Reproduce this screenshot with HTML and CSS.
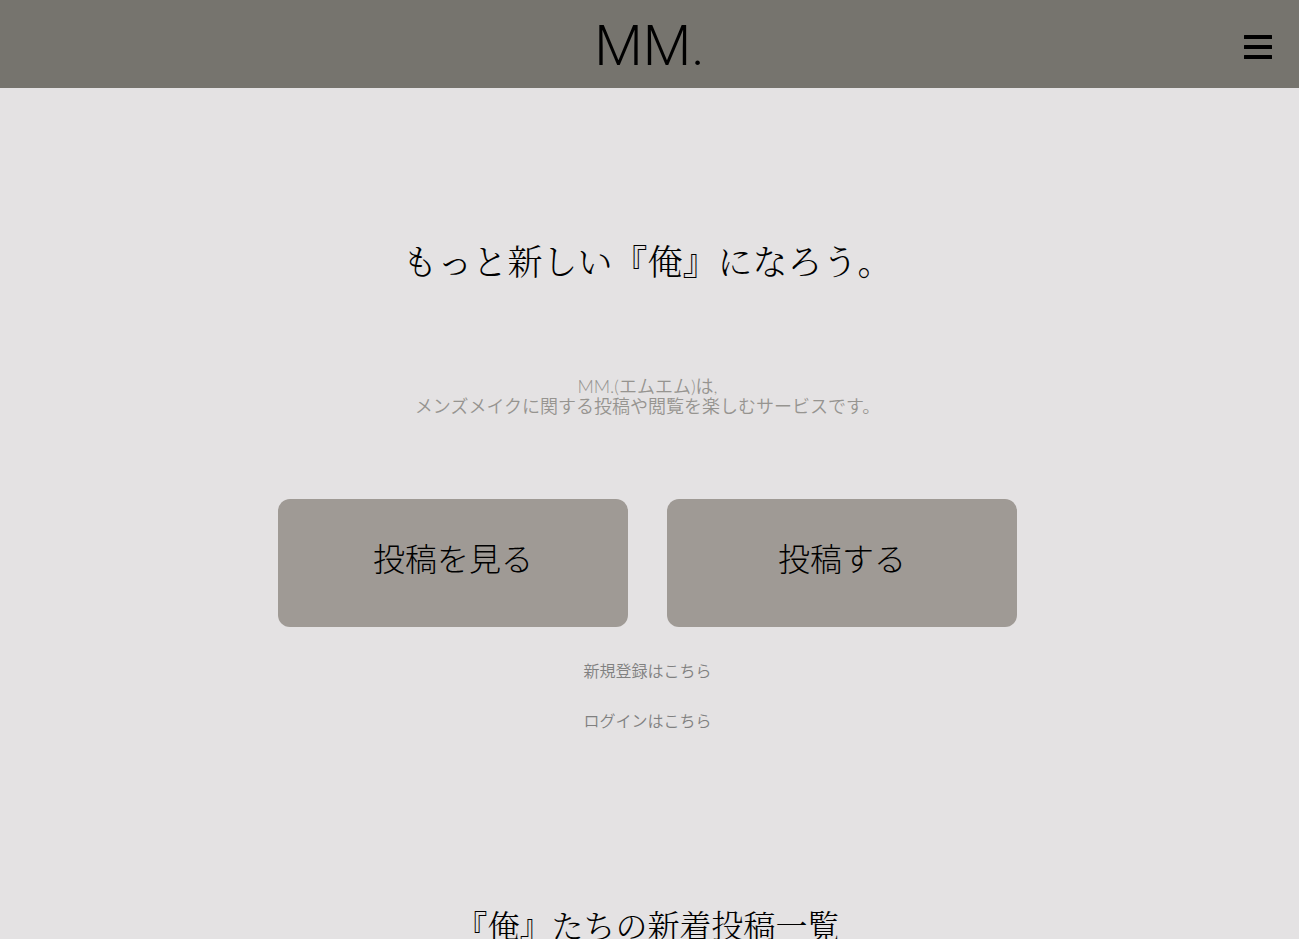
FILE: index.html
```html
<!DOCTYPE html>
<html lang="ja">
<head>
<meta charset="utf-8">
<title>MM.</title>
<link rel="stylesheet" href="styles.css">
</head>
<body>
<header class="header">
  <a class="logo" href="#">MM.</a>
  <button class="menu" type="button" aria-label="メニュー">
    <svg viewBox="0 0 28 24" width="28" height="24" aria-hidden="true"><path d="M.5 0h27q.5 0 .5.5v3q0 .5-.5.5H.5Q0 4 0 3.500v-3Q0 0 .5 0zM.5 10h27q.5 0 .5.5v3q0 .5-.5.5H.5q-.5 0-.5-.5v-3q0-.5.5-.5zM.5 20h27q.5 0 .5.5v3q0 .5-.5.5H.5q-.5 0-.5-.5v-3q0-.5.5-.5z"/></svg>
  </button>
</header>
<main class="main">
  <h1 class="title">もっと新しい『俺』になろう。</h1>
  <p class="lead">MM.(エムエム)は,<br>メンズメイクに関する投稿や閲覧を楽しむサービスです。</p>
  <div class="actions">
    <a class="action" href="#">投稿を見る</a>
    <a class="action" href="#">投稿する</a>
  </div>
  <nav class="links">
    <a class="link" href="#">新規登録はこちら</a>
    <a class="link" href="#">ログインはこちら</a>
  </nav>
  <h2 class="subtitle">『俺』たちの新着投稿一覧</h2>
</main>
</body>
</html>
```
FILE: styles.css
```css
* { box-sizing: border-box; }
body {
  margin: 0;
  background: #e4e2e3;
  color: #000;
  font-family: Lato, "Noto Sans CJK JP", sans-serif;
}
.header {
  display: grid;
  grid-template-columns: 1fr auto 1fr;
  align-items: center;
  padding: 0 27px;
  background: #76746e;
}
.logo {
  grid-column: 2;
  padding-top: 4px;
  color: #000;
  font-family: Roboto, sans-serif;
  font-size: 56px;
  font-weight: 300;
  line-height: 84px;
  text-decoration: none;
}
.menu {
  justify-self: end;
  padding: 6px 0 0;
  border: 0;
  background: none;
}
.menu svg { display: block; }
.main {
  display: flex;
  flex-direction: column;
  align-items: center;
  padding-right: 4px;
  text-align: center;
}
.title, .subtitle {
  margin: 0;
  font-family: "Noto Serif CJK JP", "Noto Sans CJK JP", serif;
  font-weight: 300;
}
.title {
  margin-top: 148px;
  font-size: 35px;
  line-height: 48px;
}
.lead {
  margin: 92px 0 0;
  color: #969490;
  font-size: 18px;
  font-weight: 350;
  line-height: 20px;
}
.actions {
  display: flex;
  justify-content: center;
  gap: 39px;
  width: 100%;
  margin-top: 83px;
}
.action {
  flex: 0 1 350px;
  padding: 36px 0 44px;
  border-radius: 12px;
  background: #9f9a95;
  color: #000;
  font-size: 32px;
  font-weight: 300;
  line-height: 48px;
  text-decoration: none;
}
.links {
  display: flex;
  flex-direction: column;
  gap: 26px;
  margin-top: 32px;
}
.link {
  color: #808080;
  font-size: 16px;
  font-weight: 350;
  line-height: 24px;
  text-decoration: none;
}
.subtitle {
  margin-top: 167px;
  font-size: 32px;
  line-height: 48px;
}
```
